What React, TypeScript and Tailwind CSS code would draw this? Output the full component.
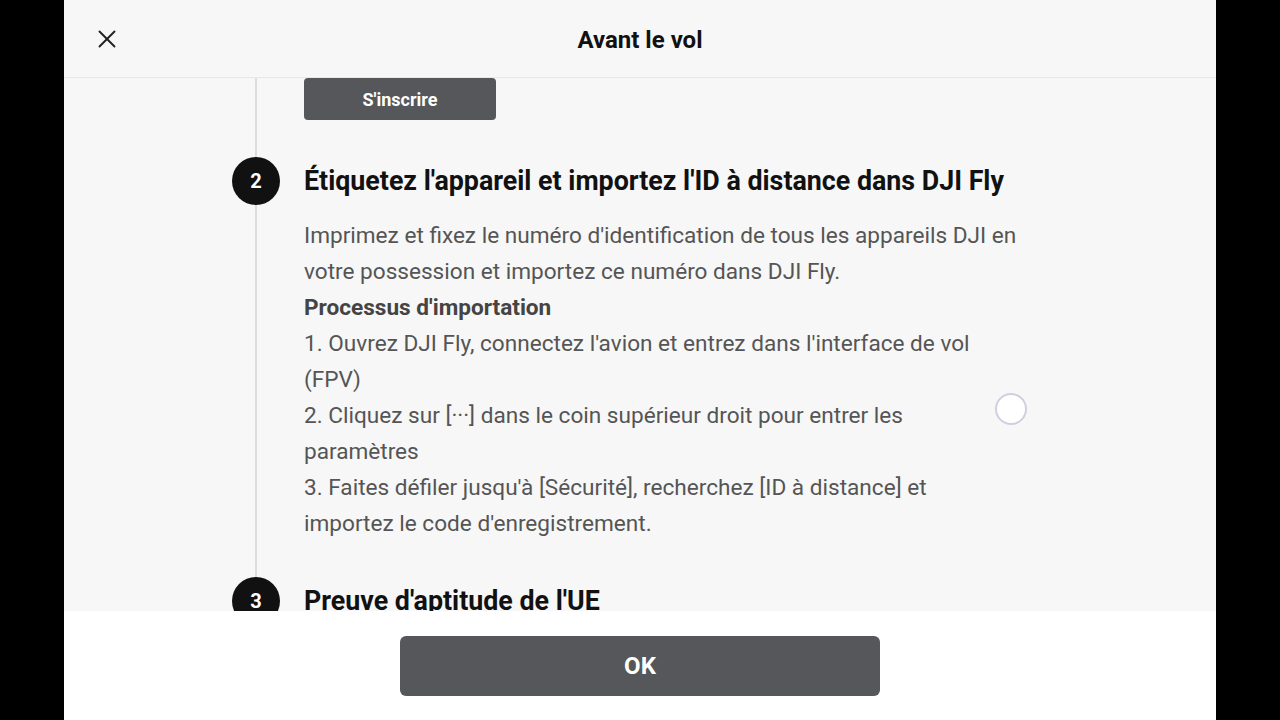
import React from 'react';
import { X } from 'lucide-react';

const steps = [
  'Imprimez et fixez le numéro d\'identification de tous les appareils DJI en votre possession et importez ce numéro dans DJI Fly.',
];

const StepBadge = ({ n }: { n: number }) => (
  <div className="w-12 h-12 rounded-full bg-[#111] text-white flex items-center justify-center text-[20px] font-bold shrink-0">
    {n}
  </div>
);

export default function App() {
  return (
    <div className="w-[1280px] h-[720px] bg-black flex justify-center" style={{ fontFamily: 'Roboto, "Noto Sans", sans-serif' }}>
      <div className="w-[1152px] h-full flex flex-col bg-[#f7f7f7]">
        {/* header */}
        <div className="h-[78px] shrink-0 border-b border-[#e8e8e8] flex items-center relative px-7">
          <X size={30} strokeWidth={1.5} className="text-[#222]" />
          <div className="flex-1 text-center text-[24px] font-bold text-[#111] -ml-[30px] mt-[2px]">Avant le vol</div>
        </div>

        {/* scrolled content */}
        <div className="flex-1 overflow-hidden pl-[168px]">
          <div className="flex gap-6">
            <div className="w-12 flex justify-center">
              <div className="w-[2px] bg-[#dcdcdc]" />
            </div>
            <div className="pb-[37px]">
              <button className="w-[192px] h-[42px] rounded bg-[#55575a] text-white text-[18px] font-bold">S'inscrire</button>
            </div>
          </div>

          <div className="flex gap-6">
            <div className="w-12 flex flex-col items-center">
              <StepBadge n={2} />
              <div className="w-[2px] flex-1 bg-[#dcdcdc]" />
            </div>
            <div className="pb-[35px]">
              <h2 className="h-12 flex items-center text-[26.8px] font-bold text-[#111] pt-[1px]">
                Étiquetez l'appareil et importez l'ID à distance dans DJI Fly
              </h2>
              <div className="mt-[13px] w-[716px] text-[22.6px] leading-[36px] text-[#555]">
                <p>{steps[0]}</p>
                <p className="font-bold text-[#444]">Processus d'importation</p>
                <p>1. Ouvrez DJI Fly, connectez l'avion et entrez dans l'interface de vol (FPV)</p>
                <p>2. Cliquez sur [···] dans le coin supérieur droit pour entrer les paramètres</p>
                <p>3. Faites défiler jusqu'à [Sécurité], recherchez [ID à distance] et importez le code d'enregistrement.</p>
              </div>
            </div>
          </div>

          <div className="flex gap-6">
            <div className="w-12 flex flex-col items-center">
              <StepBadge n={3} />
            </div>
            <h2 className="h-12 flex items-center text-[26.8px] font-bold text-[#111] pt-[1px]">Preuve d'aptitude de l'UE</h2>
          </div>
        </div>

        {/* footer */}
        <div className="h-[109px] shrink-0 bg-white flex items-center justify-center">
          <button className="w-[480px] h-[60px] rounded-md bg-[#55575a] text-white text-[24px] font-bold">OK</button>
        </div>
      </div>

      {/* loading indicator */}
      <div className="absolute left-[995px] top-[393px] w-8 h-8 rounded-full border-2 border-[#cfcfe0] bg-white" />
    </div>
  );
}
